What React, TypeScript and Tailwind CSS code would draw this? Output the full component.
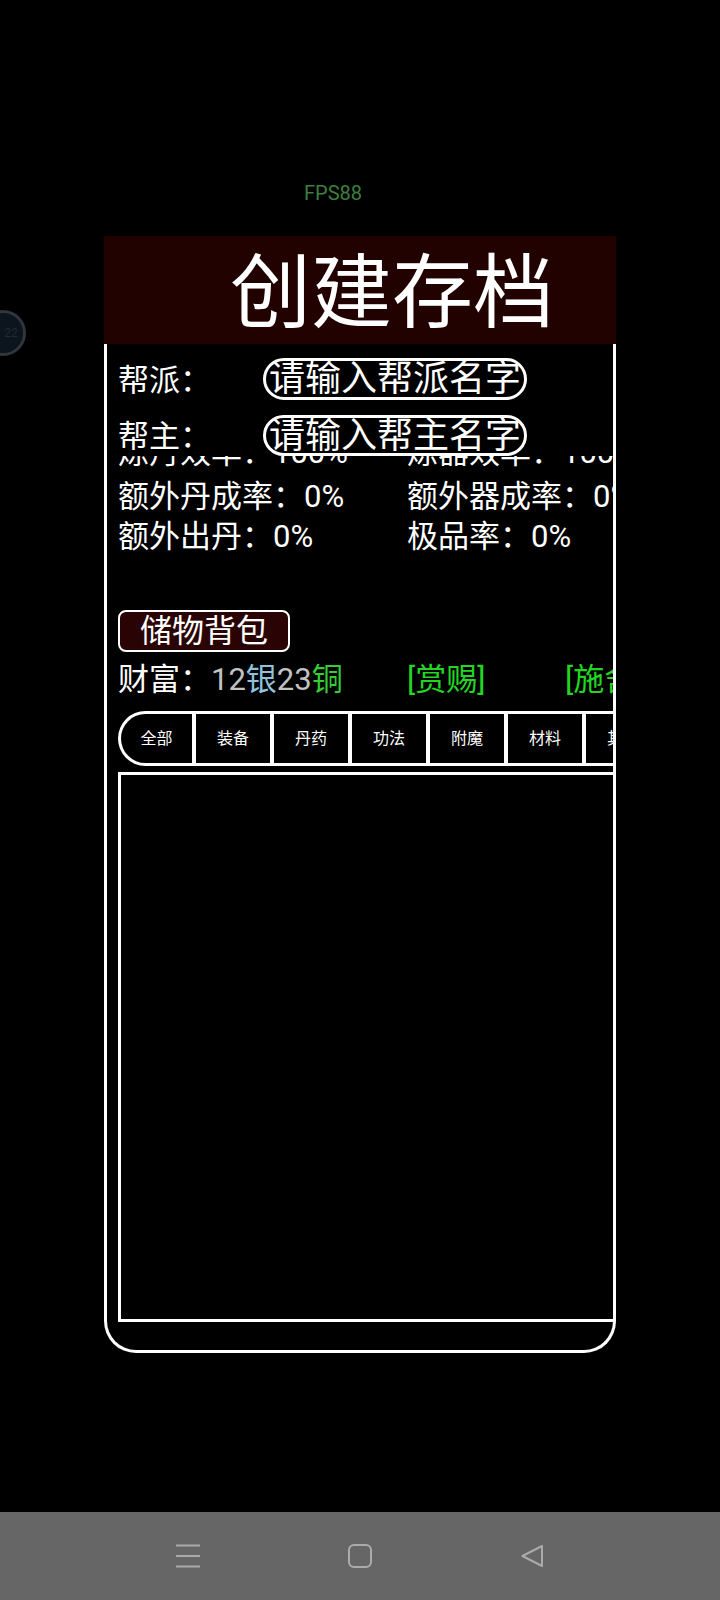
import React from 'react';

const stats = [
    ['炼丹效率：100%', '炼器效率：100%'],
    ['额外丹成率：0%', '额外器成率：0%'],
    ['额外出丹：0%', '极品率：0%'],
];

const tabs = ['全部', '装备', '丹药', '功法', '附魔', '材料', '其他'];

const NavBar = () => (
    <div className="mt-auto h-[88px] bg-[#666666] flex items-center justify-center gap-[148px] text-[#ababab]">
        {/* menu */}
        <svg width="24" height="24" viewBox="0 0 24 24" fill="none" stroke="currentColor" strokeWidth="2">
            <line x1="0" y1="1.5" x2="24" y2="1.5" />
            <line x1="0" y1="12" x2="24" y2="12" />
            <line x1="0" y1="22.5" x2="24" y2="22.5" />
        </svg>
        {/* home */}
        <svg width="24" height="24" viewBox="0 0 24 24" fill="none" stroke="currentColor" strokeWidth="2">
            <rect x="1" y="1" width="22" height="22" rx="5" />
        </svg>
        {/* back */}
        <svg width="24" height="24" viewBox="0 0 24 24" fill="none" stroke="currentColor" strokeWidth="2" strokeLinejoin="round">
            <path d="M22 2 L2.5 12 L22 22 Z" />
        </svg>
    </div>
);

const App = () => {
    return (
        <div className="relative w-[720px] h-[1600px] bg-black overflow-hidden flex flex-col font-[Roboto,'Noto_Sans_CJK_SC',sans-serif] text-white">
            {/* fps counter */}
            <div className="h-[236px] pt-[181px] pl-[304px] text-[20px] leading-[24px] text-[#3d7f3d]">FPS88</div>

            {/* floating ball, sits over the page edge */}
            <div className="absolute left-[-20px] top-[310px] w-[46px] h-[46px] rounded-full border-[3px] border-[#30363e] bg-[#0c141d] flex items-center justify-center">
                <span className="pl-[16px] text-[12px] text-[#1f2b38]">22</span>
            </div>

            <div className="ml-[104px] w-[512px]">
                {/* title */}
                <div className="h-[108px] bg-[#220101] flex items-center pl-[126px] pt-[8px]">
                    <span className="text-[81px] leading-[90px] whitespace-nowrap">创建存档</span>
                </div>

                {/* frame */}
                <div className="border-x-[3px] border-b-[3px] border-white rounded-b-[32px] overflow-hidden pl-[11px] pt-[14px] pb-[28px]">
                    <div className="relative z-10 bg-black">
                        <div className="flex items-center h-[42px]">
                            <span className="w-[145px] shrink-0 text-[31px] leading-[40px] pt-[3px]">帮派：</span>
                            <div className="w-[264px] h-[42px] rounded-full border-[3px] border-white flex items-center justify-center">
                                <span className="text-[36px] leading-[36px] whitespace-nowrap">请输入帮派名字</span>
                            </div>
                        </div>
                        <div className="flex items-center h-[41px] mt-[15px]">
                            <span className="w-[145px] shrink-0 text-[31px] leading-[40px] pt-[3px]">帮主：</span>
                            <div className="w-[264px] h-[41px] rounded-full border-[3px] border-white flex items-center justify-center">
                                <span className="text-[36px] leading-[36px] whitespace-nowrap">请输入帮主名字</span>
                            </div>
                        </div>
                    </div>

                    {/* stats, scrolled so the first row is half hidden */}
                    <div className="overflow-hidden">
                        {stats.map((row, i) => (
                            <div
                                key={row[0]}
                                className={`grid grid-cols-[289px_289px] whitespace-nowrap text-[31px] h-[40px] ${i === 0 ? '-mt-[19px] leading-[32px]' : 'leading-[40px]'}`}
                            >
                                <span>{row[0]}</span>
                                <span>{row[1]}</span>
                            </div>
                        ))}
                    </div>

                    <button className="mt-[53px] w-[172px] h-[42px] rounded-[8px] border-2 border-white bg-[#2a0404] flex items-center justify-center">
                        <span className="text-[32px] leading-[36px]">储物背包</span>
                    </button>

                    <div className="mt-[8px] flex whitespace-nowrap text-[31px] leading-[40px]">
                        <div className="w-[289px] shrink-0">
                            财富：<span className="text-[#c2c2c2]">12</span>
                            <span className="text-[#8ec3de]">银</span>
                            <span className="text-[#c2c2c2]">23</span>
                            <span className="text-[#35cf35]">铜</span>
                        </div>
                        <div className="w-[158px] shrink-0 text-[#22d622]">[赏赐]</div>
                        <div className="shrink-0 text-[#22d622]">[施舍]</div>
                    </div>

                    {/* category tabs */}
                    <div className="mt-[11px] w-[600px] h-[55px] flex border-y-[3px] border-l-[3px] border-white rounded-l-[28px]">
                        {tabs.map((t, i) => (
                            <div
                                key={t}
                                className={`shrink-0 h-full flex items-center justify-center border-r-4 border-white text-[16px] ${i === 0 ? 'w-[75px]' : 'w-[78px]'}`}
                            >
                                {t}
                            </div>
                        ))}
                    </div>

                    {/* item list */}
                    <div className="mt-[6px] w-[520px] h-[550px] border-[3px] border-white" />
                </div>
            </div>

            <NavBar />
        </div>
    );
};

export default App;
